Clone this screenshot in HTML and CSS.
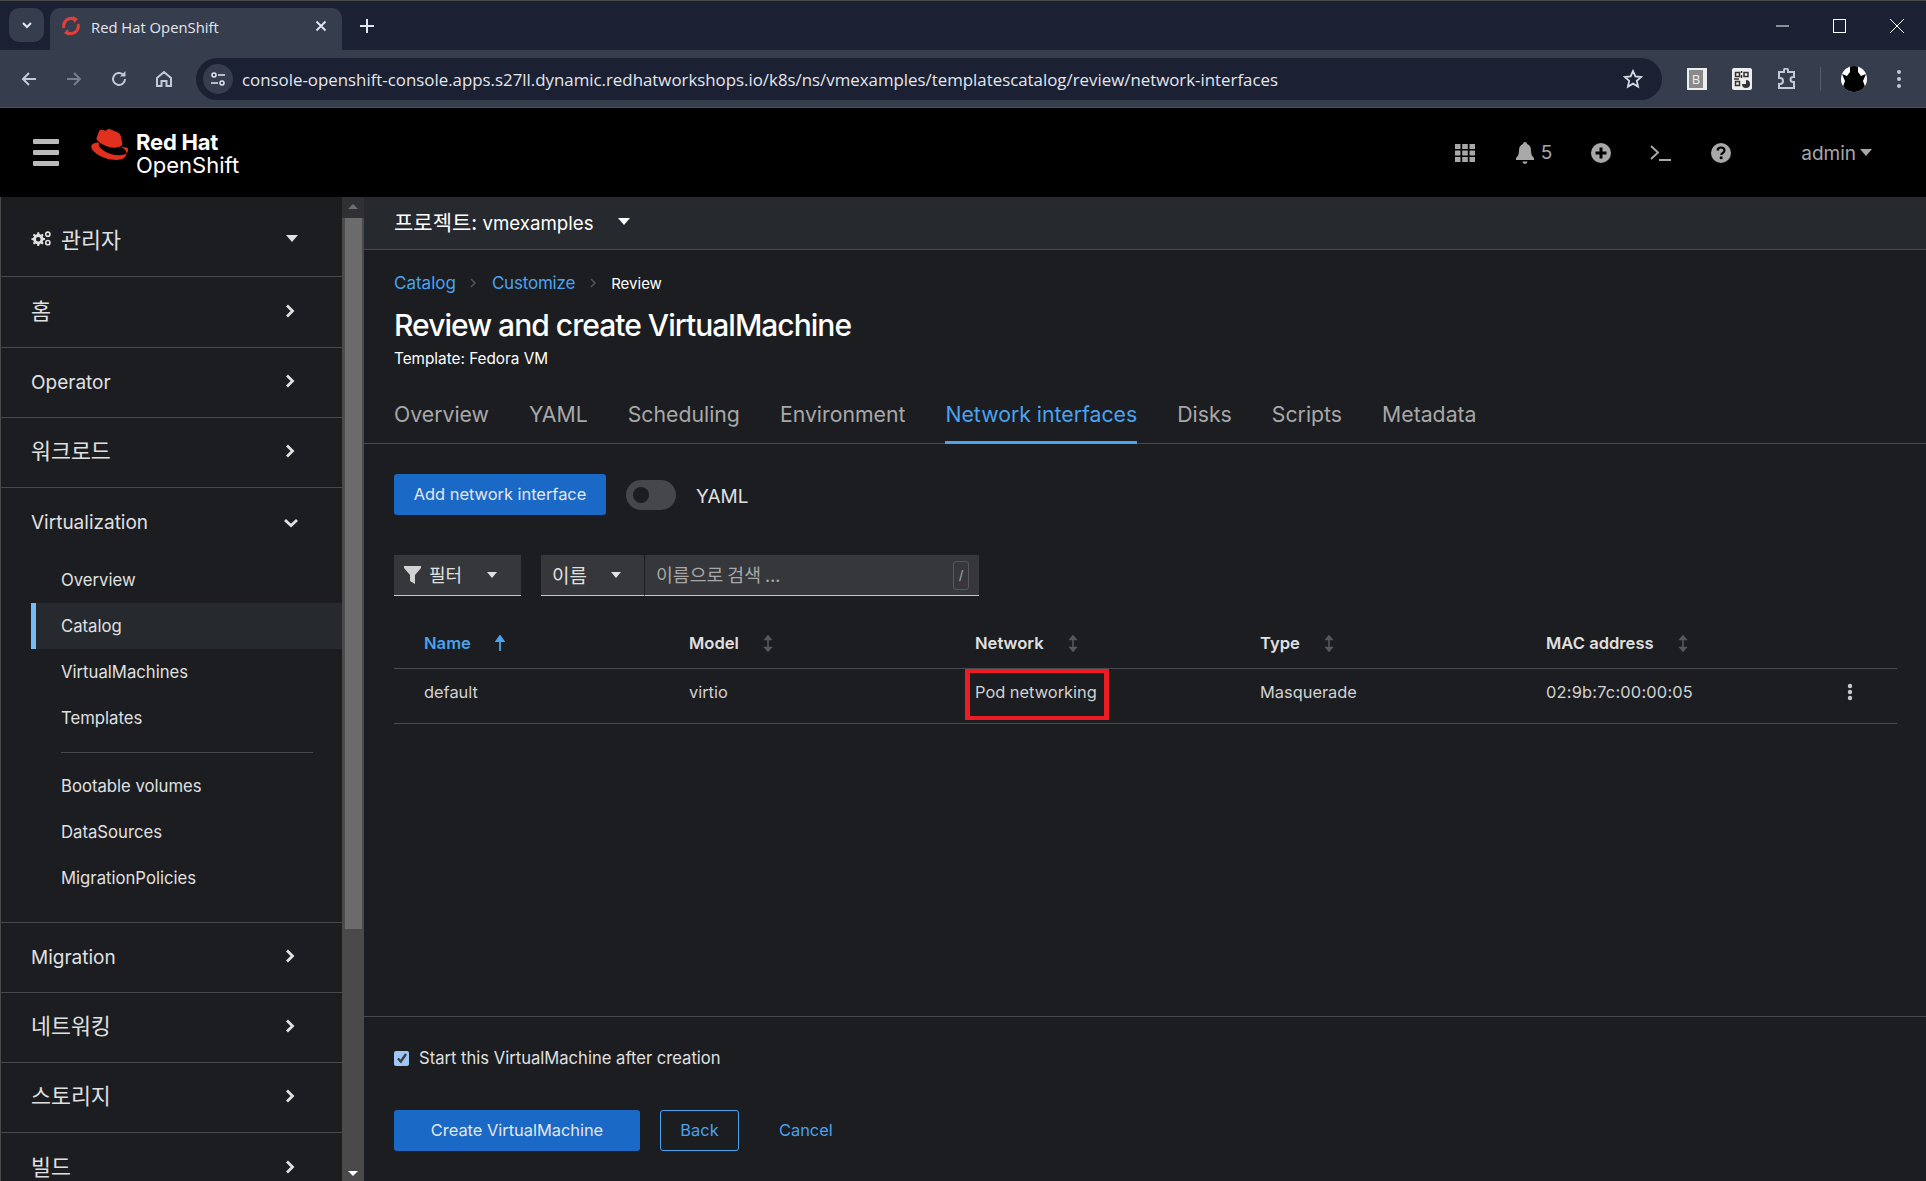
FILE: index.html
```html
<!DOCTYPE html>
<html lang="en">
<head>
    <meta charset="UTF-8">
    <meta name="viewport" content="width=device-width, initial-scale=1.0">
    <title>Red Hat OpenShift</title>
    <link rel="stylesheet" href="styles.css">
</head>
<body>
    <!-- browser window chrome -->
    <div class="tabstrip">
        <div class="tab-search">
            <svg width="14" height="14" viewBox="0 0 14 14"><path d="M3 5l4 4 4-4" fill="none" stroke="#e3e6ee" stroke-width="2"/></svg>
        </div>
        <div class="tab">
            <svg class="favicon" width="20" height="22" viewBox="0 0 20 22"><path d="M3 13A7.5 7.5 0 0 1 14 4.5M17 9A7.5 7.5 0 0 1 6 17.500" fill="none" stroke="#e0403a" stroke-width="3"/><path d="M12 1l5 3-4 4zM8 21l-5-3 4-4z" fill="#e0403a"/></svg>
            <span class="tab-title">Red Hat OpenShift</span>
            <svg width="12" height="12" viewBox="0 0 12 12"><path d="M1.500 1.500l9 9M10.500 1.500l-9 9" stroke="#e3e6ee" stroke-width="1.800"/></svg>
        </div>
        <svg class="tab-new" width="14" height="14" viewBox="0 0 14 14"><path d="M7 0v14M0 7h14" stroke="#e3e6ee" stroke-width="2"/></svg>
        <div class="window-btns">
            <svg width="14" height="14" viewBox="0 0 14 14"><path d="M0 7h13" stroke="#fff"/></svg>
            <svg width="14" height="14" viewBox="0 0 14 14"><rect x="0.500" y="0.500" width="12" height="13" fill="none" stroke="#fff"/></svg>
            <svg width="14" height="14" viewBox="0 0 14 14"><path d="M0 0l14 14M14 0L0 14" stroke="#fff"/></svg>
        </div>
    </div>
    <div class="toolbar">
        <div class="nav-btns">
            <svg width="18" height="18" viewBox="0 0 18 18"><path d="M16 9H3M9 3L3 9l6 6" fill="none" stroke="#c4c9d6" stroke-width="2"/></svg>
            <svg width="18" height="18" viewBox="0 0 18 18"><path d="M2 9h13M9 3l6 6-6 6" fill="none" stroke="#777e8e" stroke-width="2"/></svg>
            <svg width="18" height="18" viewBox="0 0 18 18"><path d="M15 9a6 6 0 1 1-2-4.500" fill="none" stroke="#c4c9d6" stroke-width="2"/><path d="M15.500 1v5.500H10z" fill="#c4c9d6"/></svg>
            <svg width="18" height="18" viewBox="0 0 18 18"><path d="M2 8l7-6 7 6v8h-4.500v-5h-5v5H2z" fill="none" stroke="#c4c9d6" stroke-width="2"/></svg>
        </div>
        <div class="addressbar">
            <div class="site-info">
                <svg width="16" height="16" viewBox="0 0 16 16"><circle cx="4" cy="4" r="2" fill="none" stroke="#e3e6ee" stroke-width="1.500"/><path d="M8 4h7M1 12h7" stroke="#e3e6ee" stroke-width="1.500"/><circle cx="12" cy="12" r="2" fill="none" stroke="#e3e6ee" stroke-width="1.500"/></svg>
            </div>
            <span class="url">console-openshift-console.apps.s27ll.dynamic.redhatworkshops.io/k8s/ns/vmexamples/templatescatalog/review/network-interfaces</span>
            <svg width="20" height="20" viewBox="0 0 20 20"><path d="M10 2l2.400 5.400 5.800.6-4.400 3.900 1.300 5.700L10 14.600l-5.100 3 1.300-5.700L1.800 8l5.800-.6z" fill="none" stroke="#d5d9e3" stroke-width="1.800"/></svg>
        </div>
        <div class="ext-icons">
            <div class="ext-b">B</div>
            <svg width="20" height="22" viewBox="0 0 20 22"><rect width="20" height="22" rx="2" fill="#eee"/><path d="M3.500 4.500h4v4h-4zM12 4.500h4v4h-4zM3.500 13.500h4v4h-4z" fill="none" stroke="#333" stroke-width="1.500"/><path d="M9.500 3v2M9.500 7v3M2 11h5" stroke="#333" stroke-width="1.500"/><path d="M14 12a4 4 0 1 1-4 4h4z" fill="#333"/></svg>
            <svg width="20" height="22" viewBox="0 0 20 22"><path d="M2 4h5V2.500a2 2 0 0 1 4 0V4h6v5h-1a2.500 2.500 0 0 0 0 5h1v6H2v-4h1a3 3 0 0 0 0-6H2z" fill="none" stroke="#c4c9d6" stroke-width="2"/></svg>
            <span class="ext-sep"></span>
            <svg width="26" height="26" viewBox="0 0 26 26"><clipPath id="avatarClip"><circle cx="13" cy="13" r="13"/></clipPath><g clip-path="url(#avatarClip)"><rect width="26" height="26" fill="#fff"/><path d="M9 0h8v6l3 4 5-2-3 7 4 11H0l4-11-3-7 5 2 3-4z" fill="#000"/></g></svg>
            <svg width="6" height="18" viewBox="0 0 6 18"><circle cx="3" cy="2" r="2" fill="#c4c9d6"/><circle cx="3" cy="9" r="2" fill="#c4c9d6"/><circle cx="3" cy="16" r="2" fill="#c4c9d6"/></svg>
        </div>
    </div>

    <!-- console header -->
    <header class="masthead">
        <div class="hamburger"><span></span><span></span><span></span></div>
        <svg class="hat" width="41" height="31" viewBox="4 1 34 29"><path d="M27 18c2.500 0 6-.5 6-3.500 0-.3 0-.5-.1-.7L31.500 7.500C31.100 6 30.800 5.300 28.100 3.900 26 2.900 21.500 1 20.200 1c-1.200 0-1.600 1.600-3 1.600-1.400 0-2.400-1.100-3.700-1.100-1.200 0-2 .9-2.600 2.600 0 0-1.800 5-2 5.700 0 .1-.1.300-.1.400 0 2 7.800 8.500 18.200 8.500z" fill="#e1301d"/><path d="M34 15.500c.4 1.800.4 2 .4 2.200 0 3.100-3.500 4.800-8 4.800C16 22.500 7 16.400 7 12.400c0-.6.100-1.200.4-1.700C3.700 10.900 0 11.400 0 14.700 0 20.100 12.800 27 23 27c7.800 0 9.800-3.500 9.800-6.300 0-2.200-1.900-4.700-5.300-6.200z" fill="#e1301d" transform="translate(4 3)"/></svg>
        <div class="brand">
            <span class="brand-top">Red Hat</span>
            <span class="brand-bottom">OpenShift</span>
        </div>
        <div class="mast-tools">
            <svg class="tool-grid" width="20" height="18" viewBox="0 0 20 18"><path d="M0 0h5.500v5H0zM7.200 0h5.600v5H7.200zM14.500 0H20v5h-5.500zM0 6.500h5.500v5H0zM7.200 6.500h5.600v5H7.200zM14.500 6.500H20v5h-5.500zM0 13h5.500v5H0zM7.200 13h5.600v5H7.200zM14.500 13H20v5h-5.500z" fill="#a8a8a8"/></svg>
            <svg class="tool-bell" width="18" height="22" viewBox="0 0 18 22"><path d="M9 0a2 2 0 0 1 2 2c3 1 4 3.500 4 6.500 0 4 1 5.500 3 7.500v2H0v-2c2-2 3-3.500 3-7.500C3 5.500 4 3 7 2a2 2 0 0 1 2-2zM6.500 19.500h5a2.500 2.500 0 0 1-5 0z" fill="#a8a8a8"/></svg>
            <span class="bell-count">5</span>
            <svg class="tool-plus" width="20" height="20" viewBox="0 0 20 20"><circle cx="10" cy="10" r="10" fill="#a8a8a8"/><path d="M10 4.500v11M4.500 10h11" stroke="#000" stroke-width="3"/></svg>
            <svg class="tool-term" width="21" height="16" viewBox="0 0 21 16"><path d="M1 1l7 6.500L1 14" fill="none" stroke="#a8a8a8" stroke-width="2"/><path d="M9 15h12" stroke="#a8a8a8" stroke-width="2"/></svg>
            <svg class="tool-help" width="20" height="20" viewBox="0 0 20 20"><circle cx="10" cy="10" r="10" fill="#a8a8a8"/><path d="M6.500 7.500C6.800 5.500 8 4.500 10 4.500c2.200 0 3.500 1.300 3.500 3 0 2.500-3.300 2.500-3.300 4.500" fill="none" stroke="#000" stroke-width="2.200"/><rect x="8.800" y="13.500" width="2.700" height="2.600" fill="#000"/></svg>
            <span class="user">admin</span>
            <span class="caret caret-gray"></span>
        </div>
    </header>

    <div class="layout">
        <!-- side navigation -->
        <nav class="sidebar">
            <div class="nav-row">
                <span class="nav-label nav-cjk">
                    <svg width="20" height="16" viewBox="0.500 1 19 15"><path d="M7 2l1.200.1.400 1.700 1.300.6 1.500-.9 1.100 1.100-.9 1.500.6 1.300 1.700.4v1.600l-1.700.4-.6 1.300.9 1.500-1.100 1.100-1.500-.9-1.300.6-.4 1.700H6.600l-.4-1.700-1.300-.6-1.500.9-1.100-1.100.9-1.500-.6-1.300L.9 9.500V7.900l1.700-.4.6-1.300-.9-1.500 1.100-1.100 1.500.9 1.300-.6.400-1.700zm.4 4.500a2.200 2.200 0 1 0 0 4.400 2.200 2.200 0 0 0 0-4.400z" fill="#e0e0e0"/><circle cx="16.500" cy="4" r="2" fill="none" stroke="#e0e0e0" stroke-width="1.500"/><circle cx="16.500" cy="12" r="2" fill="none" stroke="#e0e0e0" stroke-width="1.500"/></svg>
                    관리자
                </span>
                <span class="caret caret-nav"></span>
            </div>
            <div class="nav-row">
                <span class="nav-label nav-cjk">홈</span>
                <svg class="chev" width="10" height="14" viewBox="0 0 10 14"><path d="M2 1.500L7.500 7 2 12.500" fill="none" stroke="#e0e0e0" stroke-width="2.800"/></svg>
            </div>
            <div class="nav-row">
                <span class="nav-label">Operator</span>
                <svg class="chev" width="10" height="14" viewBox="0 0 10 14"><path d="M2 1.500L7.500 7 2 12.500" fill="none" stroke="#e0e0e0" stroke-width="2.800"/></svg>
            </div>
            <div class="nav-row">
                <span class="nav-label nav-cjk">워크로드</span>
                <svg class="chev" width="10" height="14" viewBox="0 0 10 14"><path d="M2 1.500L7.500 7 2 12.500" fill="none" stroke="#e0e0e0" stroke-width="2.800"/></svg>
            </div>
            <div class="nav-section">
                <div class="nav-section-head">
                    <span class="nav-label">Virtualization</span>
                    <svg class="chev-down" width="14" height="10" viewBox="0 0 14 10"><path d="M1 2l6 5.500L13 2" fill="none" stroke="#e0e0e0" stroke-width="2.800"/></svg>
                </div>
                <a class="sub-item">Overview</a>
                <a class="sub-item sub-active">Catalog</a>
                <a class="sub-item">VirtualMachines</a>
                <a class="sub-item">Templates</a>
                <div class="sub-divider"></div>
                <a class="sub-item">Bootable volumes</a>
                <a class="sub-item">DataSources</a>
                <a class="sub-item">MigrationPolicies</a>
            </div>
            <div class="nav-row">
                <span class="nav-label">Migration</span>
                <svg class="chev" width="10" height="14" viewBox="0 0 10 14"><path d="M2 1.500L7.500 7 2 12.500" fill="none" stroke="#e0e0e0" stroke-width="2.800"/></svg>
            </div>
            <div class="nav-row">
                <span class="nav-label nav-cjk">네트워킹</span>
                <svg class="chev" width="10" height="14" viewBox="0 0 10 14"><path d="M2 1.500L7.500 7 2 12.500" fill="none" stroke="#e0e0e0" stroke-width="2.800"/></svg>
            </div>
            <div class="nav-row">
                <span class="nav-label nav-cjk">스토리지</span>
                <svg class="chev" width="10" height="14" viewBox="0 0 10 14"><path d="M2 1.500L7.500 7 2 12.500" fill="none" stroke="#e0e0e0" stroke-width="2.800"/></svg>
            </div>
            <div class="nav-row nav-last">
                <span class="nav-label nav-cjk">빌드</span>
                <svg class="chev" width="10" height="14" viewBox="0 0 10 14"><path d="M2 1.500L7.500 7 2 12.500" fill="none" stroke="#e0e0e0" stroke-width="2.800"/></svg>
            </div>
        </nav>
        <div class="scrollbar">
            <span class="scroll-up"></span>
            <div class="scroll-thumb"></div>
            <span class="scroll-down"></span>
        </div>

        <!-- wizard page -->
        <main class="content">
            <div class="project-bar">
                <span class="project-name"><span class="cjk">프로젝트:</span> vmexamples</span>
                <span class="caret caret-project"></span>
            </div>
            <div class="page-head">
                <div class="breadcrumb">
                    <a>Catalog</a>
                    <svg width="7" height="10" viewBox="0 0 7 10"><path d="M1 1l4 4-4 4" fill="none" stroke="#555" stroke-width="1.500"/></svg>
                    <a class="crumb-tight">Customize</a>
                    <svg width="7" height="10" viewBox="0 0 7 10"><path d="M1 1l4 4-4 4" fill="none" stroke="#555" stroke-width="1.500"/></svg>
                    <span>Review</span>
                </div>
                <h1>Review and create VirtualMachine</h1>
                <p class="template-name">Template: Fedora VM</p>
            </div>
            <div class="tabs">
                <a>Overview</a>
                <a>YAML</a>
                <a>Scheduling</a>
                <a>Environment</a>
                <a class="tab-active">Network interfaces</a>
                <a>Disks</a>
                <a>Scripts</a>
                <a>Metadata</a>
            </div>
            <div class="tab-body">
                <div class="actions">
                    <button class="btn-primary btn-add">Add network interface</button>
                    <span class="toggle"><span class="toggle-knob"></span></span>
                    <span class="toggle-label">YAML</span>
                </div>
                <div class="filters">
                    <div class="filter-box filter-main">
                        <svg width="17" height="18" viewBox="0 0 17 18"><path d="M0 0h17v2l-6 7v9l-5-3V9L0 2z" fill="#d2d2d2"/></svg>
                        <span class="cjk">필터</span>
                        <span class="caret caret-filter"></span>
                    </div>
                    <div class="filter-box filter-name">
                        <span class="cjk">이름</span>
                        <span class="caret caret-filter"></span>
                    </div>
                    <div class="filter-box filter-input">
                        <span class="cjk search-hint">이름으로 검색 ...</span>
                        <span class="slash-key">/</span>
                    </div>
                </div>
                <table class="nics">
                    <thead>
                        <tr>
                            <th class="sorted">Name
                                <svg width="10" height="17" viewBox="0 0 10 17"><path d="M5 16V3M1.500 6L5 1l3.500 5z" fill="#4aa3ef" stroke="#4aa3ef" stroke-width="1.800"/></svg>
                            </th>
                            <th>Model
                                <svg width="10" height="17" viewBox="0 0 10 17"><path d="M5 3v11M2 4.500L5 1l3 3.500zM2 12.500L5 16l3-3.500z" fill="#55575b" stroke="#55575b" stroke-width="1.600"/></svg>
                            </th>
                            <th>Network
                                <svg width="10" height="17" viewBox="0 0 10 17"><path d="M5 3v11M2 4.500L5 1l3 3.500zM2 12.500L5 16l3-3.500z" fill="#55575b" stroke="#55575b" stroke-width="1.600"/></svg>
                            </th>
                            <th>Type
                                <svg width="10" height="17" viewBox="0 0 10 17"><path d="M5 3v11M2 4.500L5 1l3 3.500zM2 12.500L5 16l3-3.500z" fill="#55575b" stroke="#55575b" stroke-width="1.600"/></svg>
                            </th>
                            <th>MAC address
                                <svg width="10" height="17" viewBox="0 0 10 17"><path d="M5 3v11M2 4.500L5 1l3 3.500zM2 12.500L5 16l3-3.500z" fill="#55575b" stroke="#55575b" stroke-width="1.600"/></svg>
                            </th>
                            <th></th>
                        </tr>
                    </thead>
                    <tbody>
                        <tr>
                            <td>default</td>
                            <td>virtio</td>
                            <td class="cell-marked"><span class="red-box">Pod networking</span></td>
                            <td>Masquerade</td>
                            <td class="cell-mac">02:9b:7c:00:00:05</td>
                            <td class="cell-kebab">
                                <svg width="6" height="18" viewBox="0 0 6 18"><circle cx="3" cy="3" r="2.200" fill="#c8c8c8"/><circle cx="3" cy="9" r="2.200" fill="#c8c8c8"/><circle cx="3" cy="15" r="2.200" fill="#c8c8c8"/></svg>
                            </td>
                        </tr>
                    </tbody>
                </table>
            </div>
            <div class="page-foot">
                <label class="start-check"><span class="checkbox"><svg width="12" height="12" viewBox="0 0 12 12"><path d="M2 6.500l2.800 3L10 2" fill="none" stroke="#3a3f47" stroke-width="2.400"/></svg></span>Start this VirtualMachine after creation</label>
                <div class="foot-btns">
                    <button class="btn-primary btn-create">Create VirtualMachine</button>
                    <button class="btn-outline">Back</button>
                    <a class="btn-link">Cancel</a>
                </div>
            </div>
        </main>
    </div>
</body>
</html>
```

FILE: styles.css
```css
* {
    box-sizing: border-box;
}

html, body {
    margin: 0;
    padding: 0;
}

body {
    width: 1926px;
    height: 1181px;
    overflow: hidden;
    font-family: Inter, "Noto Sans CJK KR", sans-serif;
    background-color: #1b1d21;
    color: #e0e0e0;
    display: flex;
    flex-direction: column;
}

.cjk, .nav-cjk {
    font-family: "Noto Sans CJK KR", sans-serif;
}

/* browser chrome */
.tabstrip {
    height: 50px;
    flex: none;
    background-color: #1b2132;
    border-top: 1px solid #4a4a4a;
    display: flex;
    align-items: flex-start;
    padding: 7px 0 0 9px;
    font-family: "Open Sans", sans-serif;
}

.tab-search {
    width: 35px;
    height: 34px;
    border-radius: 10px;
    background-color: #363d4d;
    display: flex;
    align-items: center;
    justify-content: center;
}

.tab {
    width: 292px;
    height: 42px;
    margin-left: 6px;
    padding: 0 15px 6px 11px;
    border-radius: 10px 10px 0 0;
    background-color: #363d4d;
    display: flex;
    align-items: center;
    color: #e3e6ee;
    font-size: 14.800px;
}

.tab-title {
    flex: 1;
    margin-left: 10px;
    padding-top: 1px;
}

.tab-new {
    margin: 11px 0 0 18px;
}

.window-btns {
    margin-left: auto;
    margin-right: 22px;
    padding-top: 11px;
    display: flex;
    gap: 43px;
}

.toolbar {
    height: 58px;
    flex: none;
    background-color: #363d4d;
    border-bottom: 1px solid #4a5060;
    display: flex;
    align-items: center;
    padding-left: 20px;
    font-family: "Open Sans", sans-serif;
}

.nav-btns {
    width: 176px;
    display: flex;
    gap: 27px;
}

.addressbar {
    width: 1466px;
    height: 42px;
    border-radius: 21px;
    background-color: #1b2132;
    display: flex;
    align-items: center;
    padding: 0 19px 0 7px;
}

.site-info {
    width: 30px;
    height: 30px;
    border-radius: 50%;
    background-color: #363d4d;
    display: flex;
    align-items: center;
    justify-content: center;
}

.url {
    flex: 1;
    margin-left: 9px;
    padding-top: 1px;
    font-size: 16.850px;
    color: #e3e6ee;
    white-space: nowrap;
}

.ext-icons {
    display: flex;
    align-items: center;
    margin-left: 25px;
}

.ext-b {
    width: 20px;
    height: 22px;
    border: 2px solid #eee;
    border-right-width: 4px;
    color: #eee;
    background-color: #8a8a8a;
    font-size: 13px;
    line-height: 18px;
    text-align: center;
}

.ext-icons svg {
    margin-left: 25px;
}

.ext-icons .ext-sep + svg {
    margin-left: 20px;
}

.ext-sep {
    width: 1px;
    height: 24px;
    margin-left: 23px;
    background-color: #565c6b;
}

.ext-icons svg:last-child {
    margin-left: 29px;
}

/* masthead */
.masthead {
    height: 89px;
    flex: none;
    background-color: #000;
    display: flex;
    align-items: center;
    padding-left: 33px;
}

.hamburger {
    width: 26px;
    display: flex;
    flex-direction: column;
    gap: 6px;
}

.hamburger span {
    height: 5px;
    border-radius: 1px;
    background-color: #bbb;
}

.hat {
    margin: -17px 0 0 30px;
}

.brand {
    margin-left: 6px;
    padding-top: 3px;
    display: flex;
    flex-direction: column;
    color: #fff;
    line-height: 23px;
}

.brand-top {
    font-size: 22px;
    font-weight: 700;
    letter-spacing: -0.2px;
}

.brand-bottom {
    font-size: 22px;
}

.mast-tools {
    margin-left: auto;
    padding-right: 54px;
    display: flex;
    align-items: center;
    color: #a8a8a8;
    font-size: 19px;
}

.tool-bell {
    margin-left: 41px;
}

.bell-count {
    margin-left: 7px;
}

.tool-plus {
    margin-left: 39px;
}

.tool-term {
    margin-left: 39px;
}

.tool-help {
    margin-left: 40px;
}

.user {
    margin-left: 70px;
    padding-top: 2px;
}

.caret {
    display: inline-block;
    width: 0;
    height: 0;
    border-left: 6px solid transparent;
    border-right: 6px solid transparent;
    border-top: 7px solid #fff;
}

.caret-gray {
    border-top-color: #a8a8a8;
    margin-left: 4px;
}

/* page body */
.layout {
    flex: 1;
    min-height: 0;
    display: flex;
}

.sidebar {
    width: 342px;
    height: 984px;
    overflow: hidden;
    flex: none;
    border-left: 1px solid #4a4a4a;
    display: grid;
    grid-template-rows: 80px 71px 70px 70px 435px 70px 70px 70px 70px;
    font-size: 19px;
}

.nav-row {
    display: flex;
    align-items: center;
    justify-content: space-between;
    padding: 0 47px 3px 30px;
    border-bottom: 1px solid #47494d;
}

.nav-row:first-child {
    padding-top: 7px;
}

.nav-last {
    border-bottom: none;
}

.nav-label {
    display: flex;
    align-items: center;
    gap: 10px;
    padding-top: 3px;
}

.nav-cjk {
    padding-top: 0;
    padding-bottom: 3px;
    font-size: 21.700px;
}

.nav-row:first-child .nav-cjk {
    padding-bottom: 0;
}

.caret-nav {
    border-top-color: #e0e0e0;
    margin-right: -3px;
}

.nav-section {
    border-bottom: 1px solid #47494d;
    display: flex;
    flex-direction: column;
}

.nav-section-head {
    height: 69px;
    flex: none;
    display: flex;
    align-items: center;
    justify-content: space-between;
    padding: 0 44px 0 30px;
}

.nav-section-head .nav-label {
    padding-top: 0;
}

.sub-item {
    height: 46px;
    flex: none;
    padding-left: 60px;
    font-size: 16.700px;
    line-height: 46px;
}

.sub-active {
    margin-left: 30px;
    padding-left: 25px;
    border-left: 5px solid #73bcf7;
    background-color: #26292d;
}

.sub-divider {
    height: 1px;
    flex: none;
    margin: 11px 29px 10px 60px;
    background-color: #47494d;
}

.scrollbar {
    width: 22px;
    flex: none;
    background-color: #4a4a4a;
    display: flex;
    flex-direction: column;
    align-items: center;
}

.scroll-up {
    width: 100%;
    height: 21px;
    background-color: #2f3033;
    flex: none;
}

.scroll-up::after {
    content: "";
    display: block;
    width: 0;
    margin: 7px auto 0;
    border-left: 5px solid transparent;
    border-right: 5px solid transparent;
    border-bottom: 5px solid #6e6e6e;
}

.scroll-thumb {
    width: 17px;
    height: 711px;
    background-color: #6b6b6b;
    flex: none;
}

.scroll-down {
    margin-top: auto;
    margin-bottom: 5px;
    width: 0;
    border-left: 5px solid transparent;
    border-right: 5px solid transparent;
    border-top: 5px solid #fff;
}

.content {
    flex: 1;
    min-width: 0;
    display: flex;
    flex-direction: column;
}

.project-bar {
    height: 53px;
    flex: none;
    background-color: #26292d;
    border-bottom: 1px solid #47494d;
    padding: 0 0 4px 30px;
    display: flex;
    align-items: center;
    color: #fff;
    font-size: 18.700px;
}

.project-name .cjk {
    font-size: 21px;
}

.caret-project {
    margin-left: 24px;
}

.page-head {
    padding: 23px 30px 0;
}

.breadcrumb {
    display: flex;
    align-items: center;
    gap: 14.500px;
    height: 20px;
    font-size: 17px;
    color: #4aa3ef;
}

.crumb-tight {
    letter-spacing: -0.2px;
}

.breadcrumb span {
    font-size: 15px;
    color: #fff;
}

h1 {
    margin: 10px 0 0;
    font-size: 30px;
    line-height: 44px;
    font-weight: 500;
    color: #fff;
    letter-spacing: -0.97px;
}

.template-name {
    margin: 2px 0 0;
    font-size: 15.300px;
    line-height: 20px;
    color: #fff;
}

.tabs {
    height: 75px;
    flex: none;
    padding: 25px 30px 0;
    border-bottom: 1px solid #47494d;
    display: flex;
    gap: 40px;
    font-size: 21.250px;
    color: #a8a8a8;
}

.tabs a {
    height: 50px;
    line-height: 40px;
}

.tab-active {
    color: #4aa3ef;
    border-bottom: 3px solid #4aa3ef;
}

.tab-body {
    flex: 1;
    padding: 30px 29px 0 30px;
}

.actions {
    display: flex;
    align-items: center;
}

.btn-primary {
    height: 41px;
    padding: 0 0 2px;
    border: none;
    border-radius: 3px;
    background-color: #1a69c7;
    color: #e6e6e6;
    font-family: inherit;
    font-size: 16.400px;
}

.btn-add {
    width: 212px;
}

.toggle {
    width: 50px;
    height: 30px;
    margin-left: 20px;
    padding: 7px 0 0 7px;
    border-radius: 15px;
    background-color: #45474b;
}

.toggle-knob {
    display: block;
    width: 16px;
    height: 16px;
    border-radius: 50%;
    background-color: #1b1d21;
}

.toggle-label {
    margin-left: 20px;
    padding-top: 3px;
    font-size: 19px;
}

.filters {
    margin-top: 40px;
    display: flex;
}

.filter-box {
    height: 41px;
    background-color: #36373b;
    border-bottom: 1px solid #c8c8c8;
    display: flex;
    align-items: center;
    font-size: 18px;
}

.filter-box .cjk {
    padding-bottom: 2px;
}

.filter-main {
    width: 127px;
    padding-left: 10px;
    gap: 8px;
}

.caret-filter {
    border-left-width: 5.500px;
    border-right-width: 5.500px;
    border-top-width: 6px;
    border-top-color: #e0e0e0;
}

.filter-main .caret-filter {
    margin-left: 17px;
}

.filter-name {
    width: 104px;
    margin-left: 20px;
    padding-left: 11px;
    gap: 24px;
    border-right: 1px solid #1b1d21;
    font-size: 19px;
}

.filter-input {
    width: 334px;
    padding: 0 10px 0 11px;
    justify-content: space-between;
}

.search-hint {
    font-size: 18.300px;
    color: #a8a8a8;
}

.slash-key {
    width: 16px;
    height: 29px;
    border: 1px solid #55575b;
    border-radius: 3px;
    color: #a8a8a8;
    font-size: 13px;
    line-height: 27px;
    text-align: center;
}

.nics {
    width: 1503px;
    margin-top: 21px;
    border-collapse: collapse;
    table-layout: fixed;
    font-size: 16.400px;
}

.nics th {
    height: 51px;
    padding: 2px 0 0 30px;
    border-bottom: 1px solid #47494d;
    font-size: 16.600px;
    font-weight: 600;
    text-align: left;
}

.nics th svg {
    margin-left: 20px;
    vertical-align: -3px;
}

.nics th.sorted {
    color: #4aa3ef;
}

.nics th:nth-child(1) { width: 265px; }
.nics th:nth-child(2) { width: 286px; }
.nics th:nth-child(3) { width: 285px; }
.nics th:nth-child(4) { width: 286px; }
.nics th:nth-child(5) { width: 300px; }

.nics td {
    height: 55px;
    padding: 0 0 8px 30px;
    border-bottom: 1px solid #47494d;
    color: #d2d2d2;
}

.nics td.cell-mac {
    letter-spacing: 0.2px;
}

.nics td.cell-kebab {
    padding: 0 0 4px 31px;
}

.nics td.cell-marked {
    padding: 0 0 0 20px;
}

.red-box {
    display: block;
    width: 144px;
    height: 51px;
    margin-top: -3px;
    border: 4px solid #ed1c24;
    border-left-width: 5px;
    border-right-width: 5px;
    padding-left: 5px;
    line-height: 39px;
    white-space: nowrap;
}

.page-foot {
    height: 165px;
    flex: none;
    border-top: 1px solid #47494d;
    padding: 31px 30px 0;
}

.start-check {
    display: flex;
    align-items: center;
    gap: 10px;
    height: 20px;
    font-size: 16.600px;
    color: #e0e0e0;
}

.checkbox {
    width: 15px;
    height: 15px;
    border-radius: 2px;
    background-color: #9ec7f5;
    display: flex;
    align-items: center;
    justify-content: center;
}

.foot-btns {
    margin-top: 42px;
    display: flex;
    align-items: center;
}

.btn-create {
    width: 246px;
}

.btn-outline {
    width: 79px;
    height: 41px;
    margin-left: 20px;
    padding: 0 0 2px;
    border: 1px solid #4aa3ef;
    border-radius: 3px;
    background: none;
    color: #4aa3ef;
    font-family: inherit;
    font-size: 16.400px;
}

.btn-link {
    margin-left: 40px;
    padding-bottom: 2px;
    color: #4aa3ef;
    font-size: 16.400px;
}
```
